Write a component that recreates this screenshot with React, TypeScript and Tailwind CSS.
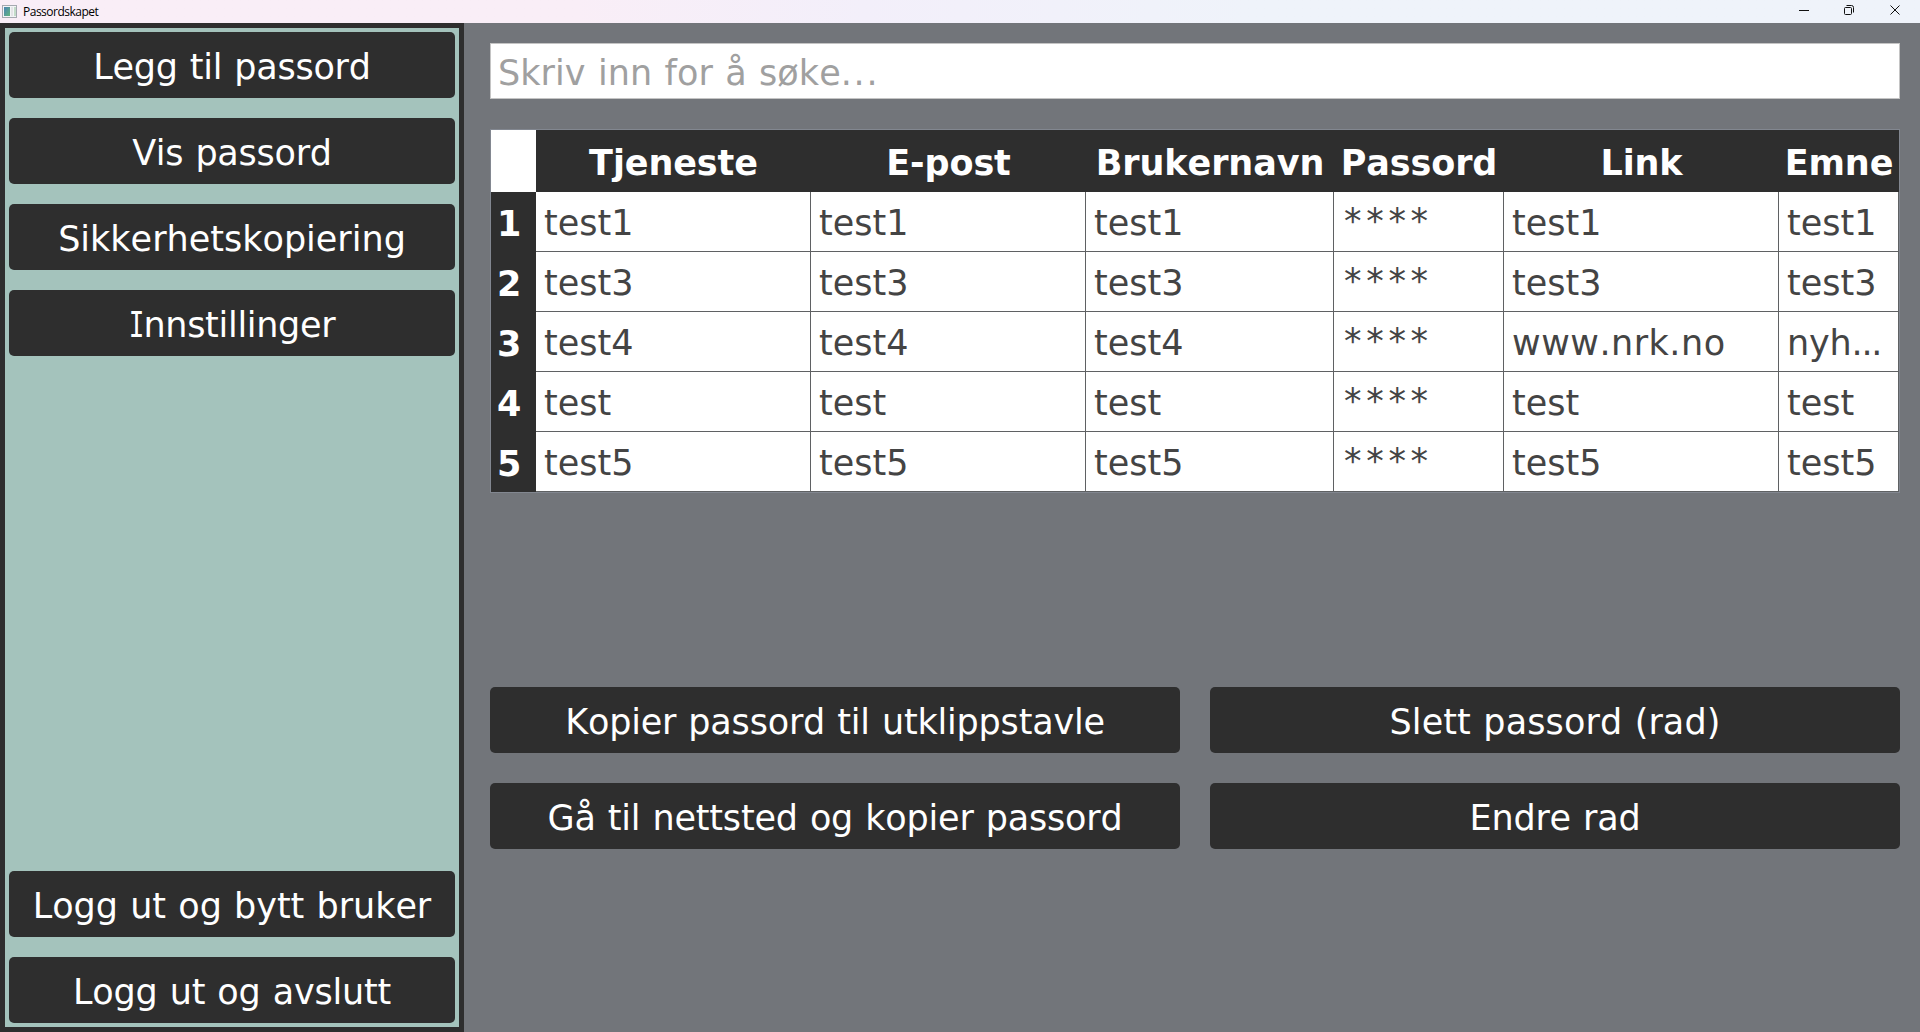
import React from 'react';

const ink = "font-['Verdana','DejaVu_Sans',sans-serif] [font-kerning:none] [word-spacing:1.2px]";

function Button({ children, spacing = '' }: { children: React.ReactNode; spacing?: string }) {
  return (
    <button className="flex h-[66px] w-full items-center justify-center rounded-[5px] bg-[#2e2e2e] pt-1 text-white [word-spacing:inherit]">
      <span className={`whitespace-pre ${spacing}`}>{children}</span>
    </button>
  );
}

function SerifI() {
  return (
    <span className="-mx-[3px] inline-block origin-center scale-x-[0.74] font-['DejaVu_Sans_Mono',monospace]">I</span>
  );
}

const columns = ['Tjeneste', 'E-post', 'Brukernavn', 'Passord', 'Link', 'Emne'];

const rows = [
  ['test1', 'test1', 'test1', '****', 'test1', 'test1'],
  ['test3', 'test3', 'test3', '****', 'test3', 'test3'],
  ['test4', 'test4', 'test4', '****', 'www.nrk.no', 'nyh...'],
  ['test', 'test', 'test', '****', 'test', 'test'],
  ['test5', 'test5', 'test5', '****', 'test5', 'test5'],
];

function CellText({ value }: { value: string }) {
  if (value === '****') return <span className="mb-1 ml-[2px] tracking-[4.7px]">{value}</span>;
  if (value.endsWith('...')) {
    return (
      <span className="tracking-[-0.2px]">
        {value.slice(0, -3)}
        <span className="tracking-[-1.2px]">...</span>
      </span>
    );
  }
  if (value.includes('.')) return <span className="tracking-[0.5px]">{value}</span>;
  return <span>{value}</span>;
}

function TitleBar() {
  return (
    <header className="flex h-[23px] shrink-0 items-center bg-linear-to-r from-[#f9eef7] from-30% via-[#f3effa] via-45% to-[#eff3fa] to-65% text-black">
      <svg className="ml-[2px] h-[14px] w-[16px]" viewBox="0 0 16 14">
        <defs>
          <linearGradient id="pane" x1="0" y1="0" x2="1" y2="1">
            <stop offset="0" stopColor="#4b83b5" />
            <stop offset="1" stopColor="#62b57e" />
          </linearGradient>
        </defs>
        <rect x="0.5" y="0.5" width="14" height="12" fill="#f3f4f6" stroke="#a5a9b0" />
        <rect x="2" y="2" width="6" height="9" fill="url(#pane)" />
        <rect x="9" y="2" width="2" height="9" fill="#e3e4e6" />
        <rect x="12" y="2" width="2" height="9" fill="#c3dcc9" />
      </svg>
      <span className="ml-[5px] pt-px font-['Segoe_UI','Open_Sans',sans-serif] text-[12px] leading-none tracking-[-0.5px]">
        Passordskapet
      </span>
      <svg className="ml-auto h-[23px] w-[130px]" viewBox="0 0 130 23" fill="none" stroke="#111" strokeWidth="1">
        <path d="M9 10.5h10" />
        <rect x="54.5" y="7.5" width="7" height="7" rx="1" />
        <path d="M56.5 5.5h5a2 2 0 0 1 2 2v5" />
        <path d="M100.5 5.5l9 9M109.5 5.5l-9 9" />
      </svg>
    </header>
  );
}

export default function App() {
  return (
    <div className={`flex h-[1032px] w-[1920px] flex-col overflow-hidden bg-[#72757a] text-[35px] leading-none ${ink}`}>
      <TitleBar />
      <div className="flex min-h-0 flex-1">
        <aside className="flex w-[464px] shrink-0 flex-col gap-5 border-5 border-[#2e2e2e] bg-[#a4c3bc] p-1">
          <Button spacing="tracking-[-0.25px]">Legg til passord</Button>
          <Button spacing="tracking-[-0.25px]">Vis passord</Button>
          <Button>Sikkerhetskopiering</Button>
          <Button spacing="tracking-[-0.3px]">
            <SerifI />
            nnstillinger
          </Button>
          <div className="flex-1" />
          <Button spacing="tracking-[-0.05px]">Logg ut og bytt bruker</Button>
          <Button spacing="tracking-[-0.2px]">Logg ut og avslutt</Button>
        </aside>
        <main className="flex flex-1 flex-col px-5 pt-5 pl-[26px]">
          <div className="flex h-14 w-full items-center border border-[#c4c4c4] bg-white px-[7px] pt-[4px] text-[#a0a0a0]">
            <span className="tracking-[0.05px]">Skriv inn for å søke</span>
            <span className="tracking-[1.7px]">...</span>
          </div>
          <section className="mt-[30px] h-[364px] border border-[#828790]">
            <div className="grid grid-cols-[45px_275px_275px_248px_170px_275px_120px]">
              <div className="h-[62px] bg-white" />
              {columns.map((name) => (
                <div
                  key={name}
                  className="flex h-[62px] items-center justify-center bg-[#2e2e2e] pt-[5px] font-bold tracking-[-0.1px] text-white"
                >
                  {name}
                </div>
              ))}
              {rows.map((row, r) => (
                <React.Fragment key={r}>
                  <div className="flex h-[60px] items-center bg-[#2e2e2e] pt-1 pl-[6px] font-bold text-white">
                    {r + 1}
                  </div>
                  {row.map((cell, c) => (
                    <div
                      key={c}
                      className="flex h-[60px] items-center border-r border-b border-[#5f6163] bg-white pt-[3px] pl-2 text-[#444]"
                    >
                      <CellText value={cell} />
                    </div>
                  ))}
                </React.Fragment>
              ))}
            </div>
          </section>
          <div className="mt-[194px] grid grid-cols-2 gap-[30px]">
            <Button spacing="tracking-[-0.2px]">Kopier passord til utklippstavle</Button>
            <Button spacing="tracking-[0.1px]">Slett passord (rad)</Button>
            <Button spacing="tracking-[-0.2px]">Gå til nettsted og kopier passord</Button>
            <Button spacing="tracking-[-0.2px]">Endre rad</Button>
          </div>
        </main>
      </div>
    </div>
  );
}
